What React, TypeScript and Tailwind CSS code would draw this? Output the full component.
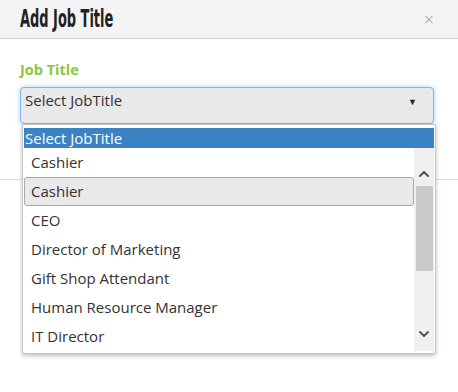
import { ChevronUp, ChevronDown } from 'lucide-react';

const jobs = [
  'Cashier',
  'Cashier',
  'CEO',
  'Director of Marketing',
  'Gift Shop Attendant',
  'Human Resource Manager',
  'IT Director',
];

export default function App() {
  return (
    <div className="h-[392px] w-[458px] overflow-hidden bg-white font-['Open_Sans',sans-serif] text-[#333]">
      <div className="flex h-[39px] items-center justify-between border-b border-[#cfcfcf] bg-[#f4f4f4] pl-5 pr-6">
        <span className="origin-left scale-x-[0.6] font-['DejaVu_Sans',sans-serif] text-[24px] font-bold whitespace-nowrap text-[#222] font-stretch-condensed">
          Add Job Title
        </span>
        <span className="text-[18px] font-light leading-none text-[#999]">×</span>
      </div>

      <div className="pl-5 pr-6 pt-[21px]">
        <div className="text-[14.5px] font-bold leading-5 text-[#8cc63f]">Job Title</div>
        <div className="relative mt-[7px]">
          <div className="flex h-[37px] items-start justify-between rounded-[4px] border border-[#7fb6ea] bg-[#e9e9e9] pl-1 pr-4 pt-[2px] shadow-[0_0_5px_rgba(102,175,233,0.6)]">
            <span className="text-[15px] leading-5">Select JobTitle</span>
            <span className="mt-[5px] text-[9px] text-[#222]">▼</span>
          </div>

          <div className="absolute left-[2px] top-[37px] z-10 w-[414px] rounded-b-[3px] border border-[#c4c4c4] bg-white px-[1px] pb-[2px] pt-[3px] shadow-[0_2px_4px_rgba(0,0,0,0.25)]">
            <div className="h-5 bg-[#3b83c5] pl-[1px] text-[15px] leading-5 text-white">Select JobTitle</div>
            <div className="flex">
              <div className="flex-1">
                {jobs.map((j, i) => (
                  <div
                    key={i}
                    className={
                      i === 1
                        ? 'flex h-[29px] items-center rounded-[3px] border border-[#a9a9a9] bg-[#e8e9e8] pl-[6px] text-[15px]'
                        : 'flex h-[29px] items-center pl-[7px] text-[15px]'
                    }
                  >
                    {j}
                  </div>
                ))}
              </div>
              <div className="flex w-5 flex-col items-center bg-[#efefef] pt-[18px]">
                <ChevronUp size={16} strokeWidth={3} className="text-[#555]" />
                <div className="mt-[4px] h-[85px] w-[17px] bg-[#c9c9c9]" />
                <div className="flex-1" />
                <ChevronDown size={16} strokeWidth={3} className="mb-[9px] text-[#555]" />
              </div>
            </div>
          </div>
        </div>
      </div>

      <div className="h-[55px]" />
      <div className="border-t border-[#ddd]" />
    </div>
  );
}
